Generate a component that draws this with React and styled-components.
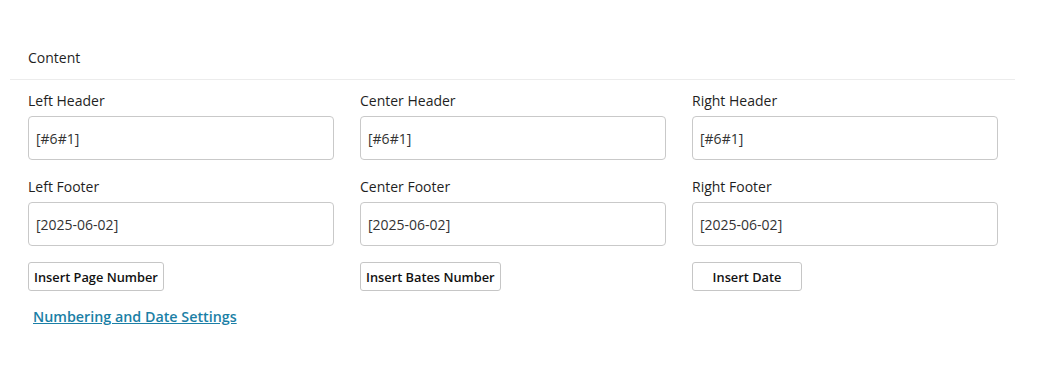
import React from "react";
import styled, { createGlobalStyle } from "styled-components";

const Global = createGlobalStyle`
  body { margin: 0; background: #fff; font-family: "Open Sans", "Noto Sans", sans-serif; color: #1f1f1f; }
`;

const Panel = styled.div`
  margin: 40px 37px 0 10px;
`;

const SectionTitle = styled.div`
  padding: 0 18px 4px;
  height: 35px;
  display: flex;
  align-items: center;
  font-size: 14px;
  border-bottom: 1px solid #ececec;
`;

const Body = styled.div`
  padding: 11px 18px 0;
`;

const Grid = styled.div`
  display: grid;
  grid-template-columns: repeat(3, 306px);
  column-gap: 26px;
  row-gap: 17px;
`;

const Field = styled.div`
  display: flex;
  flex-direction: column;
`;

const Label = styled.label`
  font-size: 14px;
  line-height: 20px;
  margin-bottom: 5px;
`;

const Input = styled.input`
  box-sizing: border-box;
  height: 44px;
  width: 100%;
  border: 1px solid #c9c9c9;
  border-radius: 4px;
  padding: 0 7px;
  font-family: inherit;
  font-size: 14px;
  color: #333;
  outline: none;
`;

const Button = styled.button`
  justify-self: start;
  align-self: start;
  margin-top: -1px;
  box-sizing: border-box;
  height: 29px;
  min-width: ${(p) => p.$min || 0}px;
  padding: 0 5px;
  background: #fff;
  border: 1px solid #c6c6c6;
  border-radius: 3px;
  font-family: inherit;
  font-size: 12.8px;
  font-weight: 600;
  color: #111;
`;

const Link = styled.a`
  display: inline-block;
  margin: 16px 0 0 5px;
  font-size: 14.3px;
  font-weight: 600;
  color: #1b7fa6;
  text-decoration: underline;
`;

export default function App() {
  const fields = [
    ["Left Header", "[#6#1]"],
    ["Center Header", "[#6#1]"],
    ["Right Header", "[#6#1]"],
    ["Left Footer", "[2025-06-02]"],
    ["Center Footer", "[2025-06-02]"],
    ["Right Footer", "[2025-06-02]"],
  ];
  return (
    <>
      <Global />
      <Panel>
        <SectionTitle>Content</SectionTitle>
        <Body>
          <Grid>
            {fields.map(([l, v]) => (
              <Field key={l}>
                <Label>{l}</Label>
                <Input defaultValue={v} />
              </Field>
            ))}
            <Button>Insert Page Number</Button>
            <Button>Insert Bates Number</Button>
            <Button $min={110}>Insert Date</Button>
          </Grid>
          <Link href="#">Numbering and Date Settings</Link>
        </Body>
      </Panel>
    </>
  );
}
